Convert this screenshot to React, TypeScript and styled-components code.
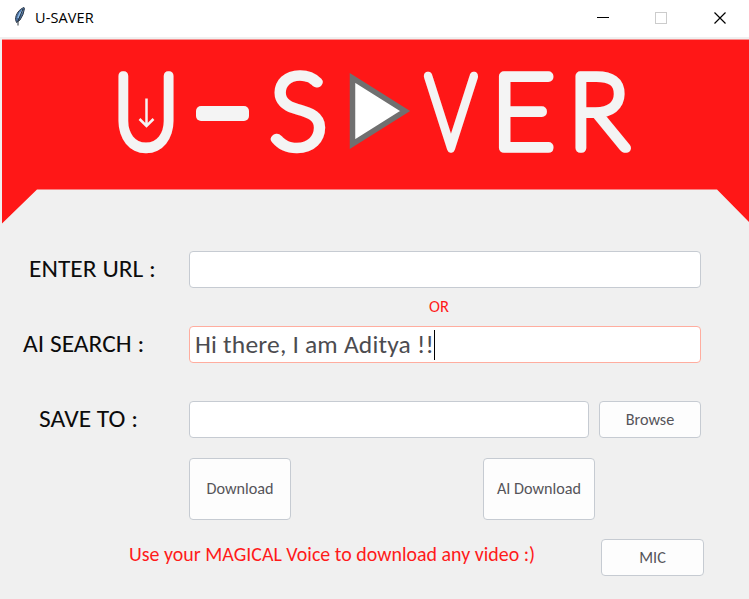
import React from "react";
import styled, { createGlobalStyle } from "styled-components";

const GlobalStyle = createGlobalStyle`
  * { box-sizing: border-box; }
  body { margin: 0; background: #f0f0f0; overflow: hidden; }
`;

const Window = styled.div`
  width: 749px;
  height: 599px;
  display: flex;
  flex-direction: column;
  background: #f0f0f0;
  font-family: Carlito, Lato, sans-serif;
  overflow: hidden;
`;

const TitleBar = styled.header`
  height: 37px;
  flex: none;
  display: flex;
  align-items: flex-start;
  background: #fff;
`;

const AppIcon = styled.svg`
  width: 14px;
  height: 22px;
  margin: 6px 0 0 13px;
`;

const Title = styled.span`
  margin: 8px auto 0 8px;
  font: 14.5px/20px "Open Sans", sans-serif;
  letter-spacing: 0.1px;
  color: #000;
`;

const WindowControls = styled.svg`
  width: 149px;
  height: 36px;
`;

const Banner = styled.div`
  height: 187px;
  flex: none;
  padding: 2px 0 0 2px;
`;

const BannerShape = styled.div`
  height: 185px;
  padding: 1px 0 0 103px;
  background: #ff1717;
  border-top: 1px solid #f78f8f;
  clip-path: polygon(0 0, 100% 0, 100% 183px, 715px 150.5px, 35px 150.5px, 0 184.5px);
`;

const Logo = styled.svg`
  display: block;
  width: 544px;
  height: 140px;
`;

const Form = styled.main`
  display: flex;
  flex-direction: column;
  padding-top: 27px;
`;

const Row = styled.div<{ $gap?: number }>`
  display: flex;
  align-items: center;
  margin-top: ${(p) => p.$gap ?? 0}px;
`;

const Label = styled.label<{ $indent: number }>`
  width: 189px;
  flex: none;
  padding: 0 0 2px ${(p) => p.$indent}px;
  font-size: 25.5px;
  line-height: 30px;
  color: #0c0c0c;
`;

const Field = styled.div<{ $width: number; $active?: boolean }>`
  width: ${(p) => p.$width}px;
  height: 37px;
  display: flex;
  align-items: center;
  padding-left: 5px;
  border: 1px solid ${(p) => (p.$active ? "#ffad9f" : "#c6cbd2")};
  border-radius: 4px;
  background: #fff;
  color: #4c4c50;
  font-size: 25.5px;
  line-height: 30px;
  letter-spacing: 0.19px;
  white-space: pre;
`;

const Caret = styled.span`
  width: 1px;
  height: 30px;
  background: #000;
`;

const Divider = styled.div`
  height: 38px;
  padding: 0 0 0 129px;
  text-align: center;
  font-size: 16.5px;
  line-height: 37px;
  color: #ff1a1a;
`;

const Button = styled.button<{ $width: number; $height: number; $left: number }>`
  width: ${(p) => p.$width}px;
  height: ${(p) => p.$height}px;
  margin-left: ${(p) => p.$left}px;
  flex: none;
  padding: 0 0 1px;
  border: 1px solid #c6cbd2;
  border-radius: 4px;
  background: #fdfdfd;
  color: #555459;
  font: 16.2px Carlito, Lato, sans-serif;
`;

const Hint = styled.p`
  width: 472px;
  margin: 0;
  padding: 0 0 8px 129px;
  font-size: 19.95px;
  line-height: 24px;
  white-space: nowrap;
  color: #ff1a1a;
`;

const letters = [
  { char: "U", x: 113, width: 66 },
  { char: "S", x: 270, width: 57 },
  { char: "V", x: 426, width: 50 },
  { char: "E", x: 491.5, width: 63 },
  { char: "R", x: 568.5, width: 60 },
];

function BrandLogo() {
  return (
    <Logo viewBox="105 41 544 140" role="img" aria-label="U-SAVER">
      <g
        fill="#f4f4f4"
        stroke="#f4f4f4"
        strokeWidth="9.6"
        strokeLinejoin="round"
        fontFamily="Lato"
        fontWeight="100"
        fontSize="102"
      >
        {letters.map(({ char, x, width }) => (
          <text key={char} x={x} y="148" textLength={width} lengthAdjust="spacingAndGlyphs">
            {char}
          </text>
        ))}
      </g>
      <rect x="196" y="106" width="53" height="15" rx="5" fill="#f4f4f4" />
      <path d="M146.5 98.5V126M139.5 119l7 7 7-7" fill="none" stroke="#f4f4f4" strokeWidth="2.5" />
      <path d="M352.5 78V144L405 111Z" fill="#fff" stroke="#707070" strokeWidth="5.5" />
    </Logo>
  );
}

export default function App() {
  return (
    <Window>
      <GlobalStyle />
      <TitleBar>
        <AppIcon viewBox="0 0 14 22">
          <path d="M11 1.5C6.500 3 2.500 8 2.500 13.500l1 3 3.500-2.500 3-5.500 1.500-6Z" fill="#496f9f" stroke="#303b49" />
          <path d="M9.500 4 7 9M7.500 6 5 12" stroke="#91bce8" strokeWidth="1.8" />
          <path d="M10 3 5 15v4.500" fill="none" stroke="#26303a" />
        </AppIcon>
        <Title>U-SAVER</Title>
        <WindowControls viewBox="600 0 149 36" fill="none" overflow="visible">
          <path d="M597 17.5h12" stroke="#000" />
          <rect x="655.5" y="12.5" width="11" height="11" stroke="#ccc" />
          <path d="m714.5 12.5 11 11m0-11-11 11" stroke="#000" strokeWidth="1.2" />
        </WindowControls>
      </TitleBar>
      <Banner>
        <BannerShape>
          <BrandLogo />
        </BannerShape>
      </Banner>
      <Form>
        <Row>
          <Label $indent={29}>ENTER URL :</Label>
          <Field $width={512} />
        </Row>
        <Divider>OR</Divider>
        <Row>
          <Label $indent={23}>AI SEARCH :</Label>
          <Field $width={512} $active>
            Hi there, I am Aditya !!
            <Caret />
          </Field>
        </Row>
        <Row $gap={38}>
          <Label $indent={39}>SAVE TO :</Label>
          <Field $width={400} />
          <Button $width={102} $height={37} $left={10}>Browse</Button>
        </Row>
        <Row $gap={20}>
          <Button $width={102} $height={62} $left={189}>Download</Button>
          <Button $width={112} $height={62} $left={192}>AI Download</Button>
        </Row>
        <Row $gap={19}>
          <Hint>Use your MAGICAL Voice to download any video :)</Hint>
          <Button $width={103} $height={37} $left={129}>MIC</Button>
        </Row>
      </Form>
    </Window>
  );
}
